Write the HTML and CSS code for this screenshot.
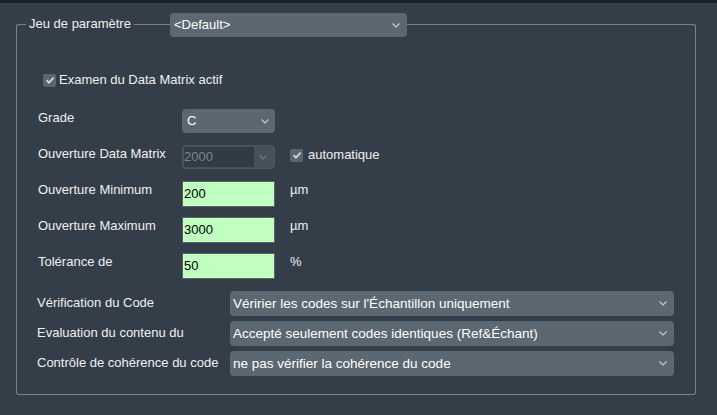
FILE: index.html
```html
<!DOCTYPE html>
<html lang="fr">
<head>
<meta charset="utf-8">
<title>Jeu de paramètre</title>
<link rel="stylesheet" href="styles.css">
</head>
<body>
<div class="topbar"></div>
<div class="group">
  <div class="group-head">
    <div class="seg seg-left"></div>
    <span class="legend">Jeu de paramètre</span>
    <div class="seg seg-mid"></div>
    <div class="combo combo-head"><span class="combo-text">&lt;Default&gt;</span><svg class="chev" viewBox="0 0 8 5" width="8" height="5"><path d="M0.5 0.5 L4 4 L7.5 0.5" fill="none" stroke="#c9ced3" stroke-width="1.1"/></svg></div>
    <div class="seg seg-right"></div>
  </div>
  <div class="group-body">
    <div class="check-row">
      <span class="checkbox"><svg viewBox="0 0 12 12" width="12" height="12"><path d="M2.5 6.2 L5 8.6 L9.6 3.6" fill="none" stroke="#d3d7db" stroke-width="1.8"/></svg></span>
      <span class="check-label">Examen du Data Matrix actif</span>
    </div>
    <div class="grid-top">
      <div class="lbl">Grade</div>
      <div class="combo combo-small"><span class="combo-text">C</span><svg class="chev" viewBox="0 0 8 5" width="8" height="5"><path d="M0.5 0.5 L4 4 L7.5 0.5" fill="none" stroke="#c9ced3" stroke-width="1.1"/></svg></div>
      <div></div>

      <div class="lbl">Ouverture Data Matrix</div>
      <div class="combo-disabled"><span class="disabled-field">2000</span><svg class="chev" viewBox="0 0 8 5" width="8" height="5"><path d="M0.5 0.5 L4 4 L7.5 0.5" fill="none" stroke="#6f7a84" stroke-width="1.1"/></svg></div>
      <div class="auto">
        <span class="checkbox"><svg viewBox="0 0 12 12" width="12" height="12"><path d="M2.5 6.2 L5 8.6 L9.6 3.6" fill="none" stroke="#d3d7db" stroke-width="1.8"/></svg></span>
        <span class="check-label">automatique</span>
      </div>

      <div class="lbl">Ouverture Minimum</div>
      <div class="input">200</div>
      <div class="unit">µm</div>

      <div class="lbl">Ouverture Maximum</div>
      <div class="input">3000</div>
      <div class="unit">µm</div>

      <div class="lbl">Tolérance de</div>
      <div class="input">50</div>
      <div class="unit">%</div>
    </div>
    <div class="grid-bottom">
      <div class="lbl2">Vérification du Code</div>
      <div class="combo combo-wide"><span class="combo-text">Véririer les codes sur l'Échantillon uniquement</span><svg class="chev" viewBox="0 0 8 5" width="8" height="5"><path d="M0.5 0.5 L4 4 L7.5 0.5" fill="none" stroke="#c9ced3" stroke-width="1.1"/></svg></div>

      <div class="lbl2">Evaluation du contenu du</div>
      <div class="combo combo-wide"><span class="combo-text">Accepté seulement codes identiques (Ref&amp;Échant)</span><svg class="chev" viewBox="0 0 8 5" width="8" height="5"><path d="M0.5 0.5 L4 4 L7.5 0.5" fill="none" stroke="#c9ced3" stroke-width="1.1"/></svg></div>

      <div class="lbl2">Contrôle de cohérence du code</div>
      <div class="combo combo-wide"><span class="combo-text">ne pas vérifier la cohérence du code</span><svg class="chev" viewBox="0 0 8 5" width="8" height="5"><path d="M0.5 0.5 L4 4 L7.5 0.5" fill="none" stroke="#c9ced3" stroke-width="1.1"/></svg></div>
    </div>
  </div>
</div>
</body>
</html>
```

FILE: styles.css
```css
html, body {
  margin: 0;
  padding: 0;
}
body {
  width: 717px;
  height: 415px;
  background: #343e48;
  color: #f0f0f0;
  font-family: "Liberation Sans", Arial, sans-serif;
  font-size: 13px;
  line-height: 16px;
  overflow: hidden;
}
.topbar {
  height: 3px;
  background: #1b2229;
}
.group {
  margin: 10px 21px 0 16px;
}
.group-head {
  display: flex;
  align-items: stretch;
  height: 24px;
}
.seg {
  margin-top: 11px;
  border-top: 1px solid #7d8185;
}
.seg-left {
  width: 9px;
  border-left: 1px solid #7d8185;
  border-top-left-radius: 3px;
}
.legend {
  align-self: center;
  padding: 0 3px 2px 3px;
  white-space: nowrap;
}
.seg-mid {
  flex: 1;
}
.seg-right {
  flex: 0 0 288px;
  border-right: 1px solid #7d8185;
  border-top-right-radius: 3px;
}
.combo {
  display: flex;
  align-items: center;
  justify-content: space-between;
  background: #5b6771;
  border-radius: 4px;
  box-sizing: border-box;
  color: #ffffff;
}
.combo-text {
  white-space: nowrap;
}
.chev {
  flex: none;
}
.combo-head {
  flex: 0 0 237px;
  height: 24px;
  padding: 0 7px 0 4px;
}
.group-body {
  border: 1px solid #7d8185;
  border-top: none;
  border-radius: 0 0 3px 3px;
  padding: 35px 21px 18px 20px;
}
.check-row {
  display: flex;
  align-items: center;
  gap: 3px;
  margin-left: 6px;
  height: 16px;
}
.checkbox {
  width: 13px;
  height: 13px;
  background: #5a6570;
  border-radius: 2px;
  display: flex;
  align-items: center;
  justify-content: center;
  flex: none;
}
.grid-top {
  display: grid;
  grid-template-columns: 129px 93px auto;
  column-gap: 15px;
  grid-auto-rows: 25px;
  row-gap: 11px;
  margin-top: 21px;
  margin-left: 1px;
}
.lbl {
  padding-top: 1px;
  white-space: nowrap;
}
.combo-small {
  height: 24px;
  padding: 0 6px 0 5px;
}
.combo-disabled {
  display: flex;
  align-items: center;
  justify-content: space-between;
  height: 24px;
  box-sizing: border-box;
  border: 1px solid #4b5660;
  background: #46515b;
  border-radius: 4px;
  padding: 1px 7px 1px 1px;
}
.disabled-field {
  align-self: stretch;
  width: 70px;
  background: #303b45;
  color: #7c8690;
  display: flex;
  align-items: center;
}
.auto {
  display: flex;
  align-items: center;
  gap: 5px;
  height: 16px;
  margin-top: 2px;
}
.input {
  background: #c0ffc0;
  border: 1px solid #5c6268;
  color: #000000;
  box-sizing: border-box;
  height: 26px;
  padding: 0 2px 0 1px;
  display: flex;
  align-items: center;
}
.unit {
  padding-top: 1px;
}
.grid-bottom {
  display: grid;
  grid-template-columns: 193px 1fr;
  grid-auto-rows: 25px;
  row-gap: 5px;
  margin-top: 13px;
}
.lbl2 {
  display: flex;
  align-items: center;
  white-space: nowrap;
  padding-bottom: 2px;
}
.combo-wide {
  height: 25px;
  padding: 0 7px 0 3px;
  font-size: 13.5px;
}
```
